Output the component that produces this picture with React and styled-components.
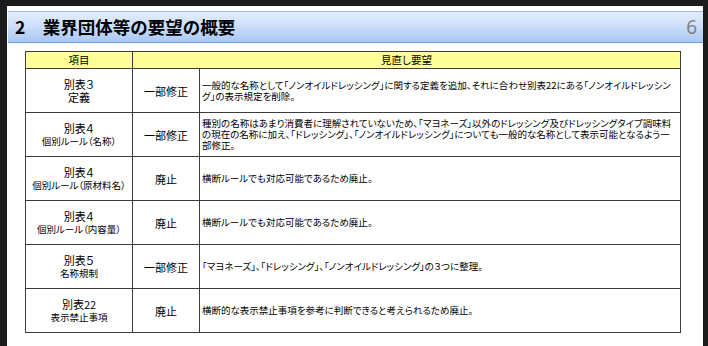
import React from 'react';
import styled, { createGlobalStyle } from 'styled-components';

const GlobalStyle = createGlobalStyle`
  html, body {
    margin: 0;
    padding: 0;
    background: #1c1c1c;
  }
  body {
    font-family: "Noto Sans CJK JP", "Noto Sans", sans-serif;
    color: #000;
  }
`;

const rows = [
  {
    table: '別表３',
    rule: '定義',
    ruleSize: 11,
    kind: '一部修正',
    lines: [
      '一般的な名称として「ノンオイルドレッシング」に関する定義を追加、それに合わせ別表22にある「ノンオイルドレッシン',
      'グ」の表示規定を削除。',
    ],
  },
  {
    table: '別表４',
    rule: '個別ルール（名称）',
    kind: '一部修正',
    lines: [
      '種別の名称はあまり消費者に理解されていないため、「マヨネーズ」以外のドレッシング及びドレッシングタイプ調味料',
      'の現在の名称に加え、「ドレッシング」、「ノンオイルドレッシング」についても一般的な名称として表示可能となるよう一',
      '部修正。',
    ],
  },
  {
    table: '別表４',
    rule: '個別ルール（原材料名）',
    kind: '廃止',
    lines: ['横断ルールでも対応可能であるため廃止。'],
  },
  {
    table: '別表４',
    rule: '個別ルール（内容量）',
    kind: '廃止',
    lines: ['横断ルールでも対応可能であるため廃止。'],
  },
  {
    table: '別表５',
    rule: '名称規制',
    kind: '一部修正',
    lines: ['「マヨネーズ」、「ドレッシング」、「ノンオイルドレッシング」の３つに整理。'],
  },
  {
    table: '別表22',
    rule: '表示禁止事項',
    kind: '廃止',
    lines: ['横断的な表示禁止事項を参考に判断できると考えられるため廃止。'],
  },
];

function App() {
  return (
    <>
      <GlobalStyle />
      <Slide>
        <TitleBar>
          <Title>2　業界団体等の要望の概要</Title>
          <PageNo>6</PageNo>
        </TitleBar>
        <Table>
          <colgroup>
            <col style={{ width: 107 }} />
            <col style={{ width: 67 }} />
            <col />
          </colgroup>
          <thead>
            <tr>
              <HeadCell>項目</HeadCell>
              <HeadCell colSpan={2}>見直し要望</HeadCell>
            </tr>
          </thead>
          <tbody>
            {rows.map((row, i) => (
              <Row key={i}>
                <ItemCell>
                  <ItemMain>{row.table}</ItemMain>
                  <ItemSub $size={row.ruleSize}>{row.rule}</ItemSub>
                </ItemCell>
                <KindCell>{row.kind}</KindCell>
                <TextCell>
                  {row.lines.map((line, j) => (
                    <Line key={j}>{line}</Line>
                  ))}
                </TextCell>
              </Row>
            ))}
          </tbody>
        </Table>
      </Slide>
    </>
  );
}

export default App;

const Slide = styled.div`
  width: 696px;
  height: 340px;
  margin: 6px 0 0 7px;
  background: #ffffff;
  display: flex;
  flex-direction: column;
  overflow: hidden;
`;

const TitleBar = styled.div`
  margin: 5px 0 0 1px;
  height: 30px;
  border-top: 1px solid #9dbbe6;
  border-bottom: 1px solid #6f9ce0;
  background: linear-gradient(#e4edfc, #cddffa 45%, #a9c8f5);
  display: flex;
  align-items: center;
  justify-content: space-between;
  padding: 0 6px 0 7px;
`;

const Title = styled.h1`
  margin: 0;
  font-size: 17.5px;
  font-weight: 700;
  line-height: 1;
  color: #000;
  white-space: nowrap;
`;

const PageNo = styled.span`
  font-family: "Noto Sans", "Open Sans", sans-serif;
  font-size: 19px;
  color: #808080;
  line-height: 1;
`;

const Table = styled.table`
  margin: 8px 0 0 18px;
  width: 656px;
  border-collapse: collapse;
  table-layout: fixed;
  border: 1px solid #3c3c3c;
  font-feature-settings: "palt";
`;

const HeadCell = styled.th`
  height: 16px;
  padding: 0;
  background: #ffff99;
  border: 1px solid #3c3c3c;
  font-size: 10.5px;
  font-weight: 400;
  line-height: 16px;
  text-align: center;
`;

const Row = styled.tr`
  height: 44px;
`;

const Cell = styled.td`
  padding: 0;
  border: 1px solid #3c3c3c;
  vertical-align: middle;
`;

const ItemCell = styled(Cell)`
  text-align: center;
`;

const ItemMain = styled.div`
  font-size: 11px;
  line-height: 13px;
`;

const ItemSub = styled.div`
  font-size: ${(p) => p.$size || 9.5}px;
  line-height: 13px;
  white-space: nowrap;
`;

const KindCell = styled(Cell)`
  text-align: center;
  font-size: 11px;
`;

const TextCell = styled(Cell)`
  padding-left: 2px;
  font-size: 9.5px;
`;

const Line = styled.div`
  line-height: 11px;
  white-space: nowrap;
`;
